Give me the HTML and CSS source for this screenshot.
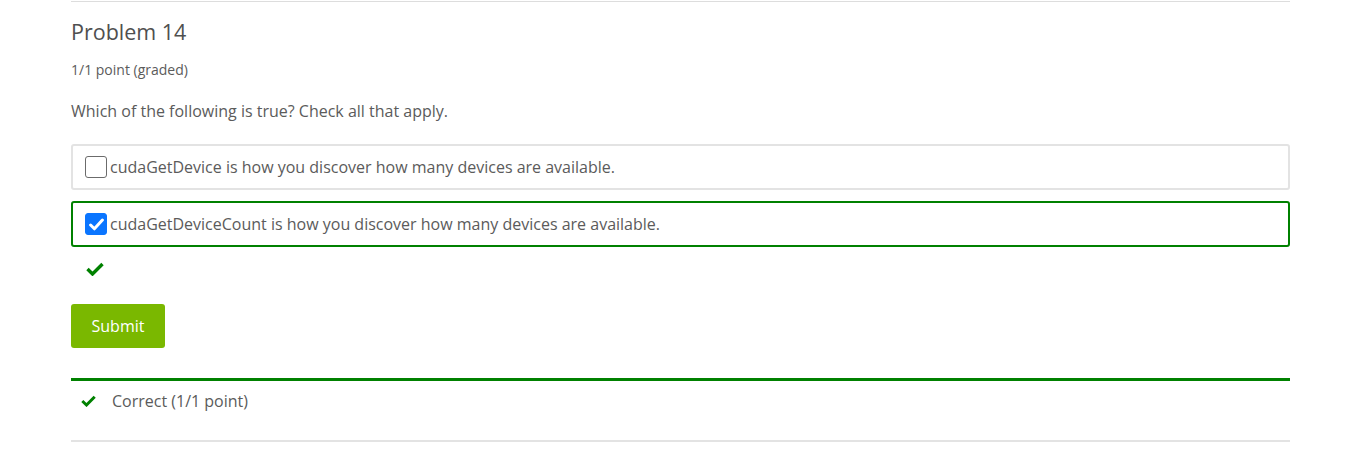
FILE: index.html
```html
<!DOCTYPE html>
<html>
<head>
<meta charset="utf-8">
<link rel="stylesheet" href="styles.css">
</head>
<body>
<div class="problem">
  <h3 class="title">Problem 14</h3>
  <div class="points">1/1 point (graded)</div>
  <p class="question">Which of the following is true? Check all that apply.</p>
  <div class="options">
    <label class="option">
      <span class="box"></span>
      <span class="label-text">cudaGetDevice is how you discover how many devices are available.</span>
    </label>
    <label class="option option-correct">
      <span class="box box-checked">
        <svg width="15" height="13" viewBox="0 0 15 13"><path d="M1.6 7 L5.4 10.8 L13.4 2" fill="none" stroke="#fff" stroke-width="3" stroke-linecap="round" stroke-linejoin="round"/></svg>
      </span>
      <span class="label-text">cudaGetDeviceCount is how you discover how many devices are available.</span>
    </label>
  </div>
  <div class="status">
    <svg class="check" width="18" height="14" viewBox="0 0 18 14"><path d="M1.5 7 L6.5 12 L16.5 2" fill="none" stroke="#008100" stroke-width="3.4"/></svg>
  </div>
  <div class="actions">
    <button class="submit">Submit</button>
  </div>
  <div class="notification">
    <svg class="check-small" width="15" height="12" viewBox="0 0 15 12"><path d="M1.3 6 L5.5 10 L13.7 1.8" fill="none" stroke="#008100" stroke-width="3"/></svg>
    <span class="notification-text">Correct (1/1 point)</span>
  </div>
</div>
</body>
</html>
```

FILE: styles.css
```css
* { box-sizing: border-box; }
body {
  margin: 0;
  background: #fff;
  font-family: "Open Sans", "Liberation Sans", sans-serif;
  color: #5b5b5b;
}
.problem {
  margin: 1px 0 0 71px;
  width: 1219px;
  border-top: 1px solid #ddd;
}
.title {
  margin: 16px 0 0;
  font-size: 21.5px;
  font-weight: 400;
  line-height: 28px;
  color: #4f4f4f;
}
.points {
  margin-top: 14px;
  font-size: 14px;
  line-height: 20px;
  color: #5b5b5b;
}
.question {
  margin: 20px 0 0;
  font-size: 16px;
  line-height: 22px;
  color: #5b5b5b;
}
.options {
  margin-top: 22px;
  display: flex;
  flex-direction: column;
  gap: 11px;
}
.option {
  display: flex;
  align-items: center;
  height: 46px;
  padding: 0 12px;
  border: 2px solid #e3e3e3;
  border-radius: 3px;
  font-size: 16px;
  color: #5b5b5b;
}
.option-correct {
  border-color: #008100;
}
.box {
  width: 22px;
  height: 22px;
  border: 1px solid #6b6b6b;
  border-radius: 3px;
  margin-right: 3px;
  display: flex;
  align-items: center;
  justify-content: center;
  flex: none;
}
.box-checked {
  background: #0a75ff;
  border-color: #0a75ff;
}
.status {
  height: 46px;
  padding: 15px 0 0 15px;
}
.check { display: block; }
.actions {
  margin-top: 11px;
}
.submit {
  width: 94px;
  height: 44px;
  border: none;
  border-radius: 3px;
  background: #7ab800;
  color: #fff;
  font-family: "Open Sans", "Liberation Sans", sans-serif;
  font-size: 16px;
  padding: 0;
}
.notification {
  margin-top: 30px;
  border-top: 3px solid #008100;
  border-bottom: 2px solid #e3e3e3;
  height: 64px;
  display: flex;
  align-items: flex-start;
  padding: 9px 0 0 10px;
}
.check-small { margin-top: 5px; }
.notification-text {
  margin-left: 16px;
  font-size: 16px;
  line-height: 22px;
  color: #5b5b5b;
}
```
